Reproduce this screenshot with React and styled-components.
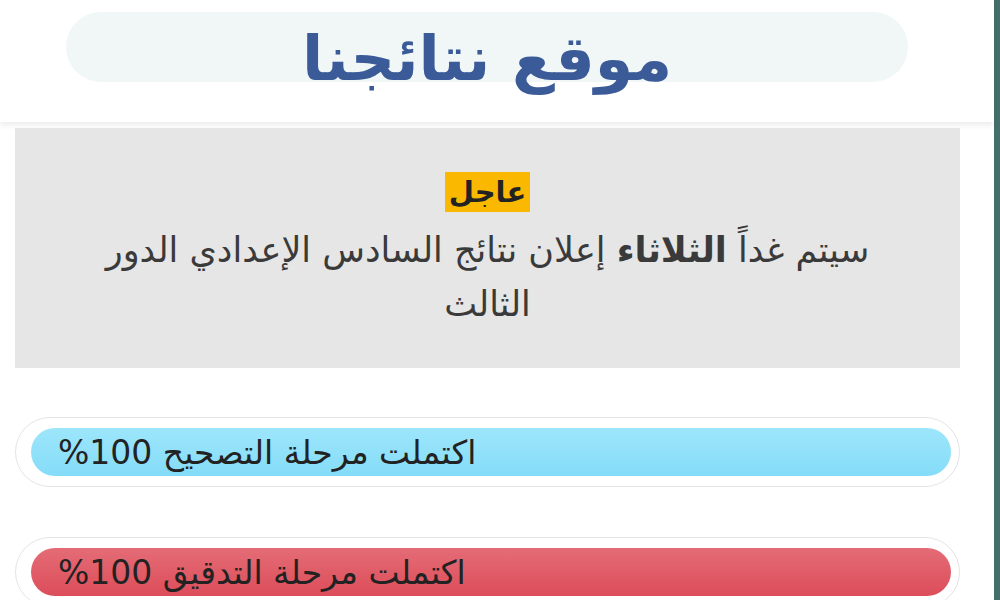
import React from 'react';
import styled, { createGlobalStyle } from 'styled-components';

const GlobalStyle = createGlobalStyle`
  html, body {
    margin: 0;
    padding: 0;
    background: #ffffff;
    font-family: 'DejaVu Sans', 'Noto Sans', sans-serif;
  }
`;

const Page = styled.div`
  direction: rtl;
  width: 1000px;
  height: 600px;
  overflow: hidden;
  display: flex;
  background: #ffffff;
`;

const Side = styled.div`
  width: 6px;
  background: #44706c;
  flex-shrink: 0;
`;

const Main = styled.div`
  flex: 1;
  display: flex;
  flex-direction: column;
`;

const Header = styled.header`
  height: 122px;
  flex-shrink: 0;
  padding: 12px 86px 0 66px;
  box-sizing: border-box;
  background: #ffffff;
  box-shadow: 0 3px 6px rgba(0, 0, 0, 0.08);
`;

const TitlePill = styled.div`
  height: 70px;
  border-radius: 35px;
  background: #f1f7f7;
  display: flex;
  align-items: center;
  justify-content: center;
`;

const Title = styled.h1`
  margin: 0;
  font-size: 62px;
  font-weight: 700;
  color: #3a5a98;
  line-height: 1;
  padding-top: 24px;
`;

const Content = styled.div`
  padding: 6px 34px 0 15px;
  display: flex;
  flex-direction: column;
`;

const Notice = styled.section`
  height: 240px;
  flex-shrink: 0;
  box-sizing: border-box;
  background: #e6e6e6;
  padding: 44px 70px 0;
  text-align: center;
  color: #3a3a3a;
`;

const Badge = styled.span`
  display: inline-block;
  background: #fbb800;
  color: #222;
  font-weight: 700;
  font-size: 29px;
  line-height: 40px;
  padding: 0 4px;
`;

const NoticeText = styled.p`
  margin: 11px 0 0;
  font-size: 35px;
  line-height: 54px;
`;

const Track = styled.div`
  margin-top: ${(p) => p.$gap}px;
  height: 70px;
  flex-shrink: 0;
  box-sizing: border-box;
  border: 1.5px solid #e4e4e4;
  border-radius: 35px;
  padding: 10px 8px 10px 15px;
  background: #ffffff;
`;

const Bar = styled.div`
  height: 100%;
  width: ${(p) => p.$value}%;
  border-radius: 24px;
  background: ${(p) => p.$bg};
  display: flex;
  align-items: center;
  justify-content: flex-end;
  padding-left: 27px;
  box-sizing: border-box;
  font-size: 33px;
  color: #222;
`;

const stages = [
  { label: 'اكتملت مرحلة التصحيح 100%', value: 100, bg: 'linear-gradient(#9de6fb, #85dcf8)', gap: 49 },
  { label: 'اكتملت مرحلة التدقيق 100%', value: 100, bg: 'linear-gradient(#e46c76, #dc4d5a)', gap: 50 },
];

export default function App() {
  return (
    <>
      <GlobalStyle />
      <Page>
        <Side />
        <Main>
          <Header>
            <TitlePill>
              <Title>موقع نتائجنا</Title>
            </TitlePill>
          </Header>
          <Content>
            <Notice>
              <Badge>عاجل</Badge>
              <NoticeText>
                سيتم غداً <b>الثلاثاء</b> إعلان نتائج السادس الإعدادي الدور الثالث
              </NoticeText>
            </Notice>
            {stages.map((s) => (
              <Track key={s.label} $gap={s.gap}>
                <Bar $value={s.value} $bg={s.bg}>{s.label}</Bar>
              </Track>
            ))}
          </Content>
        </Main>
      </Page>
    </>
  );
}
